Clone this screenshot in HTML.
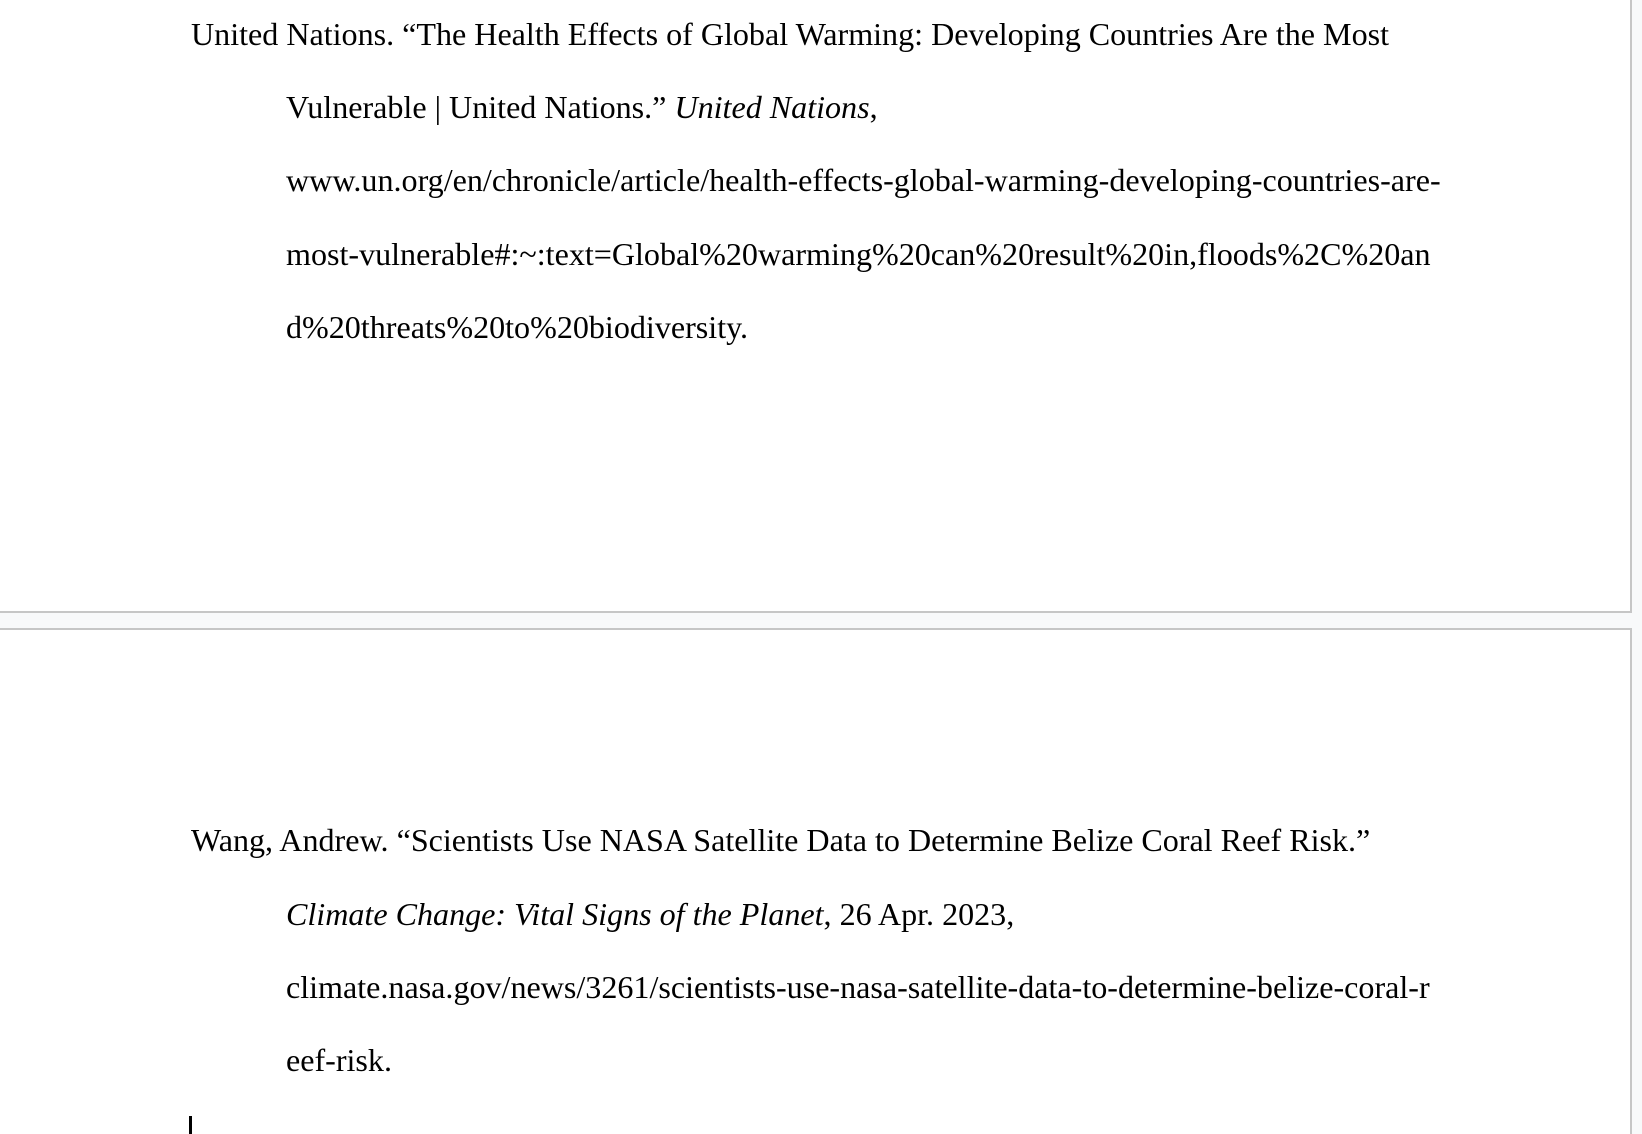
<!DOCTYPE html>
<html style="overflow:hidden;height:1134px"><head><meta charset="utf-8"><style>
body{margin:0;width:1642px;height:1134px;background:#f8f9fa;position:relative;overflow:hidden;font-family:"Liberation Serif","Times New Roman",serif;font-size:32.1px;color:#000}
.pg{position:absolute;background:#fff;border:2px solid #c6c6c6}
.l{position:absolute;white-space:nowrap;line-height:73.3px;height:73.3px}
.a{left:191px}.b{left:286px}
i{font-style:italic}
.cur{position:absolute;left:189px;top:1116px;width:3px;height:18px;background:#000}
</style></head><body>
<div class="pg" style="left:-2px;top:-2px;width:1630px;height:611px"></div>
<div class="pg" style="left:-2px;top:628px;width:1630px;height:504px;border-bottom:none"></div>
<div class="l a" style="top:-2.2px">United Nations. “The Health Effects of Global Warming: Developing Countries Are the Most</div>
<div class="l b" style="top:71.1px">Vulnerable | United Nations.” <i>United Nations</i>,</div>
<div class="l b" style="top:144.4px">www.un.org/en/chronicle/article/health-effects-global-warming-developing-countries-are-</div>
<div class="l b" style="top:217.7px">most-vulnerable#:~:text=Global%20warming%20can%20result%20in,floods%2C%20an</div>
<div class="l b" style="top:291px">d%20threats%20to%20biodiversity.</div>
<div class="l a" style="top:804.4px">Wang, Andrew. “Scientists Use NASA Satellite Data to Determine Belize Coral Reef Risk.”</div>
<div class="l b" style="top:877.7px"><i>Climate Change: Vital Signs of the Planet</i>, 26 Apr. 2023,</div>
<div class="l b" style="top:951px">climate.nasa.gov/news/3261/scientists-use-nasa-satellite-data-to-determine-belize-coral-r</div>
<div class="l b" style="top:1024.3px">eef-risk.</div>
<div class="cur"></div>
</body></html>
